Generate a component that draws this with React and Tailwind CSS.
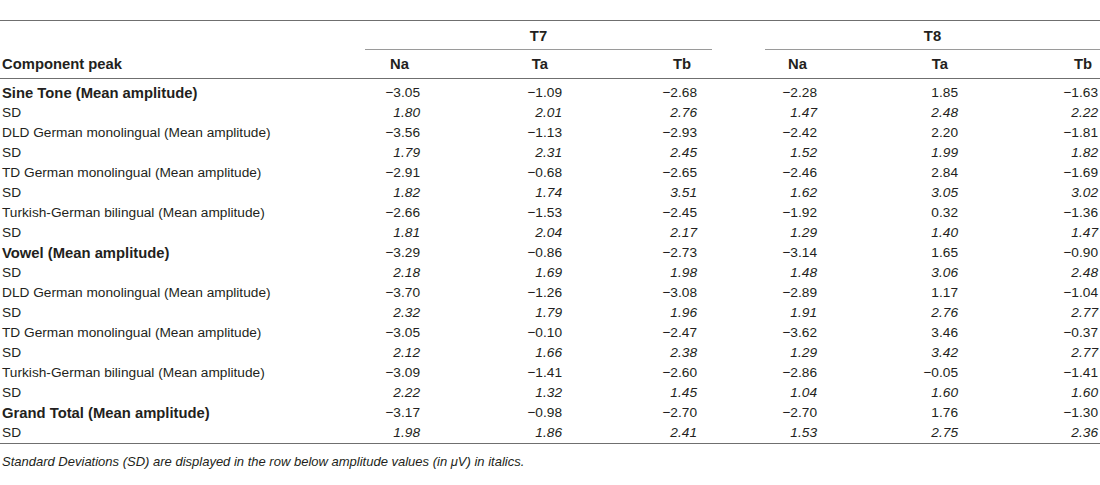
const rows = [
  { label: 'Sine Tone (Mean amplitude)', bold: true, v: ['−3.05', '−1.09', '−2.68', '−2.28', '1.85', '−1.63'] },
  { label: 'SD', sd: true, v: ['1.80', '2.01', '2.76', '1.47', '2.48', '2.22'] },
  { label: 'DLD German monolingual (Mean amplitude)', v: ['−3.56', '−1.13', '−2.93', '−2.42', '2.20', '−1.81'] },
  { label: 'SD', sd: true, v: ['1.79', '2.31', '2.45', '1.52', '1.99', '1.82'] },
  { label: 'TD German monolingual (Mean amplitude)', v: ['−2.91', '−0.68', '−2.65', '−2.46', '2.84', '−1.69'] },
  { label: 'SD', sd: true, v: ['1.82', '1.74', '3.51', '1.62', '3.05', '3.02'] },
  { label: 'Turkish-German bilingual (Mean amplitude)', v: ['−2.66', '−1.53', '−2.45', '−1.92', '0.32', '−1.36'] },
  { label: 'SD', sd: true, v: ['1.81', '2.04', '2.17', '1.29', '1.40', '1.47'] },
  { label: 'Vowel (Mean amplitude)', bold: true, v: ['−3.29', '−0.86', '−2.73', '−3.14', '1.65', '−0.90'] },
  { label: 'SD', sd: true, v: ['2.18', '1.69', '1.98', '1.48', '3.06', '2.48'] },
  { label: 'DLD German monolingual (Mean amplitude)', v: ['−3.70', '−1.26', '−3.08', '−2.89', '1.17', '−1.04'] },
  { label: 'SD', sd: true, v: ['2.32', '1.79', '1.96', '1.91', '2.76', '2.77'] },
  { label: 'TD German monolingual (Mean amplitude)', v: ['−3.05', '−0.10', '−2.47', '−3.62', '3.46', '−0.37'] },
  { label: 'SD', sd: true, v: ['2.12', '1.66', '2.38', '1.29', '3.42', '2.77'] },
  { label: 'Turkish-German bilingual (Mean amplitude)', v: ['−3.09', '−1.41', '−2.60', '−2.86', '−0.05', '−1.41'] },
  { label: 'SD', sd: true, v: ['2.22', '1.32', '1.45', '1.04', '1.60', '1.60'] },
  { label: 'Grand Total (Mean amplitude)', bold: true, v: ['−3.17', '−0.98', '−2.70', '−2.70', '1.76', '−1.30'] },
  { label: 'SD', sd: true, v: ['1.98', '1.86', '2.41', '1.53', '2.75', '2.36'] },
]

// label | T7 Na | T7 Ta | T7 Tb | pad | gap | T8 Na | T8 Ta | T8 Tb | pad
const cols = 'grid grid-cols-[365px_55px_142px_135px_15px_53px_52px_141px_140px_2px]'

function DataRow({ row }) {
  const cell = row.sd ? 'text-right italic' : 'text-right'
  return (
    <div className={`${cols} h-[20px] items-center leading-none text-[13.7px]`}>
      <div className={`pl-[2px] ${row.bold ? 'font-bold text-[14.8px]' : ''}`}>{row.label}</div>
      <div className={cell}>{row.v[0]}</div>
      <div className={cell}>{row.v[1]}</div>
      <div className={cell}>{row.v[2]}</div>
      <div />
      <div />
      <div className={cell}>{row.v[3]}</div>
      <div className={cell}>{row.v[4]}</div>
      <div className={cell}>{row.v[5]}</div>
      <div />
    </div>
  )
}

export default function App() {
  return (
    <div
      className="w-[1100px] h-[485px] bg-white text-[#231f20] text-[14px] overflow-hidden pt-[20px]"
      style={{ fontFamily: '"Liberation Sans", Arial, sans-serif' }}
    >
      {/* header */}
      <div className="border-t border-[#6f6f6f]">
        <div className="grid grid-cols-[365px_347px_53px_335px] h-[29px] font-bold text-[14.8px]">
          <div />
          <div className="flex items-center justify-center border-b border-[#9a9a9a] pt-[2px]">T7</div>
          <div />
          <div className="flex items-center justify-center border-b border-[#9a9a9a] pt-[2px]">T8</div>
        </div>
        <div className={`${cols} h-[29px] items-center font-bold text-[14.8px] border-b border-[#6f6f6f]`}>
          <div className="pl-[2px]">Component peak</div>
          <div className="text-right pr-[11px]">Na</div>
          <div className="text-right pr-[14px]">Ta</div>
          <div className="text-right pr-[6px]">Tb</div>
          <div />
          <div />
          <div className="text-right pr-[10px]">Na</div>
          <div className="text-right pr-[10px]">Ta</div>
          <div className="text-right pr-[6px]">Tb</div>
          <div />
        </div>
      </div>

      {/* body */}
      <div className="pt-[4px] border-b border-[#6f6f6f]">
        {rows.map((r, i) => (
          <DataRow key={i} row={r} />
        ))}
      </div>

      <div className="pl-[2px] pt-[10px] text-[13px] italic leading-[16px]">
        Standard Deviations (SD) are displayed in the row below amplitude values (in μV) in italics.
      </div>
    </div>
  )
}
